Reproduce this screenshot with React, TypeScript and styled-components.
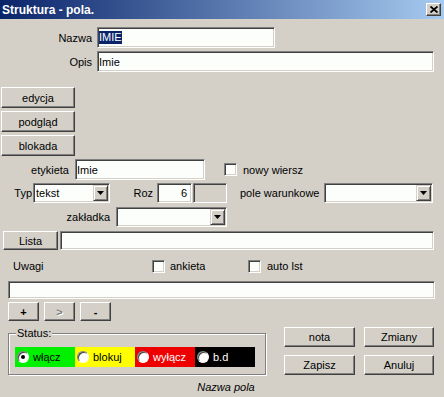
import React from 'react';
import styled, { createGlobalStyle } from 'styled-components';

const Global = createGlobalStyle`
  html, body { margin: 0; padding: 0; background: #d4d0c8; }
  body { font-family: "Liberation Sans", Arial, sans-serif; font-size: 11px; color: #000; }
  * { box-sizing: border-box; }
`;

const Window = styled.div`
  width: 444px;
  height: 397px;
  background: #d4d0c8;
  display: flex;
  flex-direction: column;
  overflow: hidden;
`;

const TitleBar = styled.div`
  height: 19px;
  flex: none;
  display: flex;
  align-items: center;
  justify-content: space-between;
  padding: 0 3px 0 2px;
  background: linear-gradient(to right, #0a246a, #a6caf0);
`;

const Title = styled.span`
  color: #fff;
  font-weight: bold;
  font-size: 12px;
`;

const CloseBtn = styled.div`
  width: 15px;
  height: 13px;
  background: #d4d0c8;
  border: 1px solid;
  border-color: #fff #404040 #404040 #fff;
  box-shadow: inset -1px -1px #808080;
  display: flex;
  align-items: center;
  justify-content: center;
`;

const Row = styled.div<{ $mt: number; $h: number }>`
  display: flex;
  align-items: center;
  flex: none;
  margin-top: ${(p) => p.$mt}px;
  height: ${(p) => p.$h}px;
`;

const Label = styled.span<{ $w: number; $ml?: number; $align?: 'left' | 'right' }>`
  flex: none;
  width: ${(p) => p.$w}px;
  margin-left: ${(p) => p.$ml ?? 0}px;
  text-align: ${(p) => p.$align ?? 'right'};
  white-space: nowrap;
`;

const Field = styled.div<{ $w: number; $ml?: number; $blank?: boolean; $right?: boolean }>`
  flex: none;
  width: ${(p) => p.$w}px;
  height: 100%;
  margin-left: ${(p) => p.$ml ?? 0}px;
  display: flex;
  align-items: center;
  justify-content: ${(p) => (p.$right ? 'flex-end' : 'flex-start')};
  padding: 0 ${(p) => (p.$right ? 4 : 1)}px 0 1px;
  background: ${(p) => (p.$blank ? '#d4d0c8' : '#fcfefc')};
  border: 1px solid;
  border-color: #808080 #fff #fff #808080;
  box-shadow: inset 1px 1px #404040, inset -1px -1px #d4d0c8;
  white-space: nowrap;
`;

const Selected = styled.span`
  background: #0a246a;
  color: #fff;
  line-height: 13px;
`;

const Combo = styled.div<{ $w: number; $ml?: number }>`
  flex: none;
  width: ${(p) => p.$w}px;
  height: 100%;
  margin-left: ${(p) => p.$ml ?? 0}px;
  display: flex;
  align-items: center;
  padding: 1px 1px 1px 2px;
  background: #fcfefc;
  border: 1px solid;
  border-color: #808080 #fff #fff #808080;
  box-shadow: inset 1px 1px #404040, inset -1px -1px #d4d0c8;
`;

const ComboText = styled.span`
  flex: 1;
  white-space: nowrap;
`;

const DropBtn = styled.div`
  flex: none;
  width: 15px;
  height: 16px;
  background: #d4d0c8;
  border: 1px solid;
  border-color: #d4d0c8 #404040 #404040 #d4d0c8;
  box-shadow: inset 1px 1px #fff, inset -1px -1px #808080;
  display: flex;
  align-items: center;
  justify-content: center;
`;

const Btn = styled.div<{ $w: number; $h: number; $ml?: number; $disabled?: boolean; $bold?: boolean }>`
  flex: none;
  width: ${(p) => p.$w}px;
  height: ${(p) => p.$h}px;
  margin-left: ${(p) => p.$ml ?? 0}px;
  display: flex;
  align-items: center;
  justify-content: center;
  background: #d4d0c8;
  color: ${(p) => (p.$disabled ? '#808080' : '#000')};
  text-shadow: ${(p) => (p.$disabled ? '1px 1px #fff' : 'none')};
  font-weight: ${(p) => (p.$bold ? 'bold' : 'normal')};
  border: 1px solid;
  border-color: #fff #404040 #404040 #fff;
  box-shadow: inset -1px -1px #808080;
  white-space: nowrap;
`;

const BtnStack = styled.div`
  display: flex;
  flex-direction: column;
  gap: 3px;
  margin: 15px 0 0 1px;
`;

const Check = styled.div<{ $ml?: number }>`
  flex: none;
  width: 13px;
  height: 13px;
  margin-left: ${(p) => p.$ml ?? 0}px;
  background: #fcfefc;
  border: 1px solid;
  border-color: #808080 #fff #fff #808080;
  box-shadow: inset 1px 1px #404040, inset -1px -1px #d4d0c8;
`;

const CheckText = styled.span<{ $w?: number; $ml: number }>`
  flex: none;
  margin-left: ${(p) => p.$ml}px;
  width: ${(p) => (p.$w ? `${p.$w}px` : 'auto')};
  white-space: nowrap;
`;

const Bottom = styled.div`
  display: flex;
  align-items: flex-start;
  margin-top: 6px;
  flex: none;
`;

const GroupBox = styled.div`
  position: relative;
  margin: 6px 0 0 8px;
  width: 258px;
  height: 42px;
  padding: 13px 0 0 6px;
  border: 1px solid #808080;
  box-shadow: inset 1px 1px #fff, 1px 1px #fff;
`;

const Legend = styled.span`
  position: absolute;
  top: -7px;
  left: 7px;
  padding: 0 1px;
  line-height: 13px;
  background: #d4d0c8;
`;

const Strip = styled.div`
  display: flex;
  height: 20px;
`;

const Segment = styled.div<{ $bg: string; $fg: string }>`
  width: 60px;
  height: 20px;
  display: flex;
  align-items: center;
  gap: 4px;
  padding-left: 2px;
  background: ${(p) => p.$bg};
  color: ${(p) => p.$fg};
  white-space: nowrap;
`;

const Radio = styled.div<{ $on?: boolean }>`
  flex: none;
  position: relative;
  width: 12px;
  height: 12px;
  border-radius: 50%;
  background: #fff;
  border: 1px solid;
  border-color: #808080 #fff #fff #808080;
  box-shadow: inset 1px 1px #404040;
  &::after {
    content: '';
    display: ${(p) => (p.$on ? 'block' : 'none')};
    position: absolute;
    left: 3px;
    top: 3px;
    width: 4px;
    height: 4px;
    border-radius: 50%;
    background: #000;
  }
`;

const BtnGrid = styled.div`
  display: grid;
  grid-template-columns: 71px 70px;
  grid-auto-rows: 20px;
  column-gap: 9px;
  row-gap: 8px;
  margin-left: 18px;
`;

const Footer = styled.div`
  margin-top: 6px;
  padding-left: 8px;
  text-align: center;
  font-style: italic;
  line-height: 13px;
`;

const Arrow = () => (
  <svg width="7" height="4" viewBox="0 0 7 4">
    <path d="M0 0h7L3.5 4z" fill="#000" />
  </svg>
);

const statuses = [
  { label: 'włącz', bg: '#00f000', fg: '#000', on: true },
  { label: 'blokuj', bg: '#ffff00', fg: '#000' },
  { label: 'wyłącz', bg: '#ee0000', fg: '#fff' },
  { label: 'b.d', bg: '#000', fg: '#fff' },
];

export default function App() {
  return (
    <>
      <Global />
      <Window>
        <TitleBar>
          <Title>Struktura - pola.</Title>
          <CloseBtn>
            <svg width="8" height="7" viewBox="0 0 8 7">
              <path d="M0.5 0.5L7.5 6.5M7.5 0.5L0.5 6.5" stroke="#000" strokeWidth="1.8" />
            </svg>
          </CloseBtn>
        </TitleBar>

        <Row $mt={8} $h={21}>
          <Label $w={92}>Nazwa</Label>
          <Field $w={178} $ml={5}>
            <Selected>IMIE</Selected>
          </Field>
        </Row>
        <Row $mt={3} $h={21}>
          <Label $w={92}>Opis</Label>
          <Field $w={337} $ml={5}>Imie</Field>
        </Row>

        <BtnStack>
          <Btn $w={74} $h={21}>edycja</Btn>
          <Btn $w={74} $h={21}>podgląd</Btn>
          <Btn $w={74} $h={21}>blokada</Btn>
        </BtnStack>

        <Row $mt={3} $h={21}>
          <Label $w={69}>etykieta</Label>
          <Field $w={130} $ml={6}>Imie</Field>
          <Check $ml={19} />
          <CheckText $ml={6}>nowy wiersz</CheckText>
        </Row>

        <Row $mt={3} $h={20}>
          <Label $w={32}>Typ</Label>
          <Combo $w={77} $ml={1}>
            <ComboText>tekst</ComboText>
            <DropBtn><Arrow /></DropBtn>
          </Combo>
          <Label $w={43}>Roz</Label>
          <Field $w={35} $ml={4} $right>6</Field>
          <Field $w={34} $ml={1} $blank />
          <Label $w={79} $ml={13} $align="left">pole warunkowe</Label>
          <Combo $w={109} $ml={5}>
            <ComboText />
            <DropBtn><Arrow /></DropBtn>
          </Combo>
        </Row>

        <Row $mt={4} $h={20}>
          <Label $w={110}>zakładka</Label>
          <Combo $w={111} $ml={6}>
            <ComboText />
            <DropBtn><Arrow /></DropBtn>
          </Combo>
        </Row>

        <Row $mt={4} $h={19}>
          <Btn $w={55} $h={19} $ml={3}>Lista</Btn>
          <Field $w={374} $ml={2} />
        </Row>

        <Row $mt={8} $h={16}>
          <Label $w={139} $ml={13} $align="left">Uwagi</Label>
          <Check />
          <CheckText $ml={5} $w={78}>ankieta</CheckText>
          <Check />
          <CheckText $ml={6}>auto lst</CheckText>
        </Row>

        <Row $mt={7} $h={18}>
          <Field $w={427} $ml={8} />
        </Row>

        <Row $mt={3} $h={19}>
          <Btn $w={31} $h={19} $ml={8} $bold>+</Btn>
          <Btn $w={31} $h={19} $ml={5} $bold $disabled>&gt;</Btn>
          <Btn $w={31} $h={19} $ml={5} $bold>-</Btn>
        </Row>

        <Bottom>
          <GroupBox>
            <Legend>Status:</Legend>
            <Strip>
              {statuses.map((s) => (
                <Segment key={s.label} $bg={s.bg} $fg={s.fg}>
                  <Radio $on={s.on} />
                  {s.label}
                </Segment>
              ))}
            </Strip>
          </GroupBox>
          <BtnGrid>
            <Btn $w={71} $h={20}>nota</Btn>
            <Btn $w={70} $h={20}>Zmiany</Btn>
            <Btn $w={71} $h={20}>Zapisz</Btn>
            <Btn $w={70} $h={20}>Anuluj</Btn>
          </BtnGrid>
        </Bottom>

        <Footer>Nazwa pola</Footer>
      </Window>
    </>
  );
}
